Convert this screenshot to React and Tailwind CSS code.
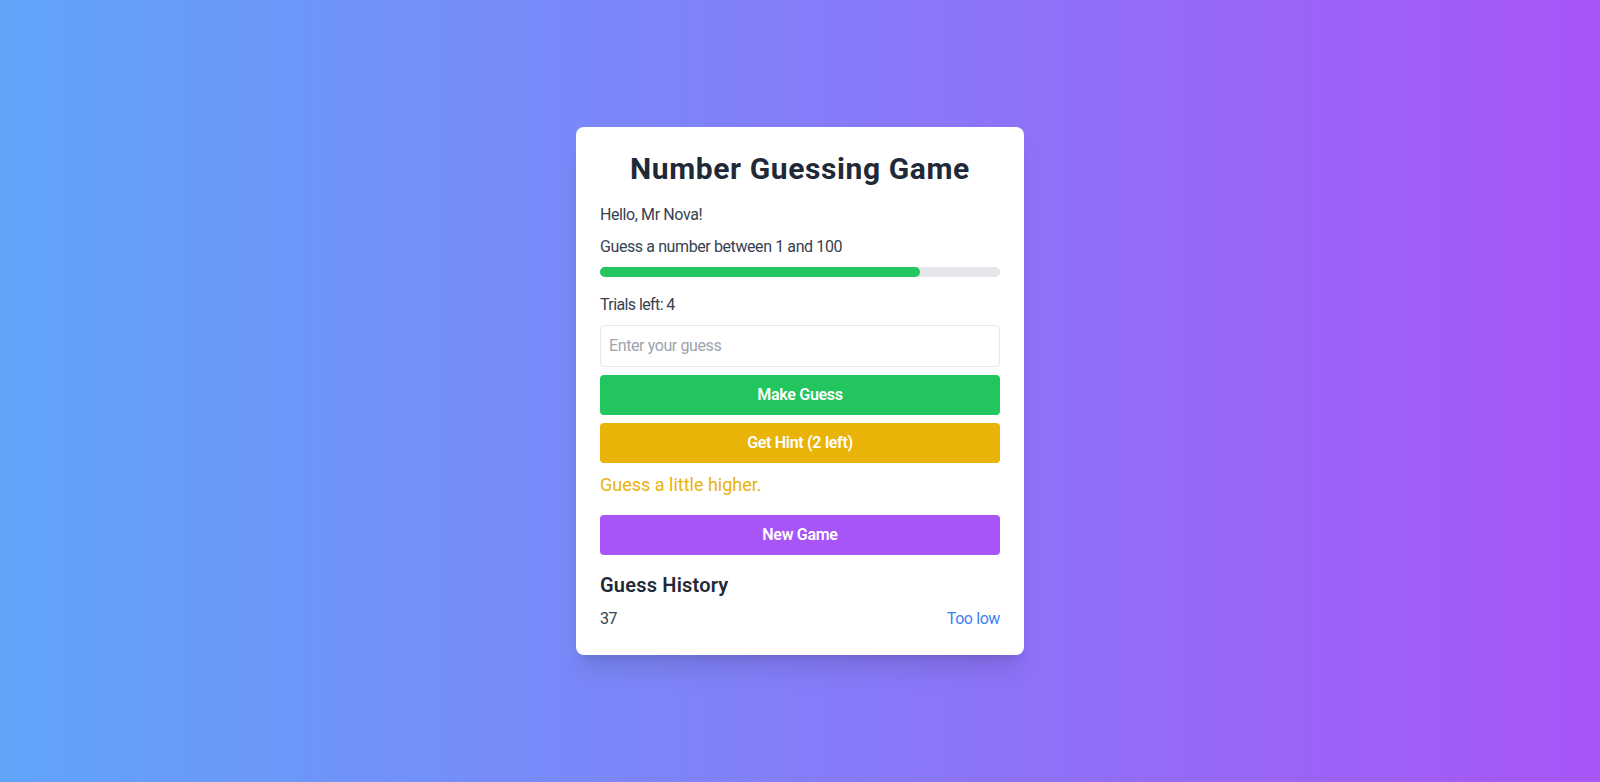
import React, { useState } from 'react';

export default function App() {
    const [guess, setGuess] = useState('');
    const history = [{ value: 37, result: 'Too low' }];

    return (
        <div
            className="min-h-screen flex items-center justify-center bg-linear-to-r/srgb from-[#60a5fa] to-[#a855f7]"
            style={{ fontFamily: '"Segoe UI", Roboto, "Noto Sans", sans-serif' }}
        >
            <div className="w-full max-w-md bg-white rounded-lg shadow-xl p-6">
                <h1 className="text-3xl font-bold text-[#1f2937] text-center tracking-[0.6px] mb-4">
                    Number Guessing Game
                </h1>

                <p className="text-[#374151] tracking-[-0.4px] mt-px mb-2">Hello, Mr Nova!</p>
                <p className="text-[#374151] tracking-[-0.4px] mb-2">Guess a number between 1 and 100</p>

                {/* Trials progress */}
                <div className="w-full h-2.5 bg-[#e5e7eb] rounded-full mb-4">
                    <div className="h-2.5 bg-[#22c55e] rounded-full" style={{ width: '80%' }} />
                </div>

                <p className="text-[#374151] tracking-[-0.6px] mb-2">Trials left: 4</p>

                <input
                    type="number"
                    value={guess}
                    onChange={(e) => setGuess(e.target.value)}
                    placeholder="Enter your guess"
                    className="w-full px-2 py-2 border border-[#e5e7eb] rounded text-[#374151] tracking-[-0.4px] placeholder-[#9ca3af] mb-2 outline-none"
                />

                <button className="w-full py-2 bg-[#22c55e] text-white font-semibold tracking-[-0.3px] rounded mb-2">
                    Make Guess
                </button>
                <button className="w-full py-2 bg-[#eab308] text-white font-semibold tracking-[-0.3px] rounded">
                    Get Hint (2 left)
                </button>

                <p className="text-lg text-[#eab308] mt-2 mb-4">Guess a little higher.</p>

                <button className="w-full py-2 bg-[#a855f7] text-white font-semibold tracking-[-0.3px] rounded">
                    New Game
                </button>

                <h2 className="text-xl font-semibold text-[#1f2937] tracking-[0.2px] mt-4 mb-2">Guess History</h2>
                <ul>
                    {history.map((h, i) => (
                        <li key={i} className="flex justify-between text-[#374151] tracking-[-0.4px]">
                            <span>{h.value}</span>
                            <span className="text-[#3b82f6]">{h.result}</span>
                        </li>
                    ))}
                </ul>
            </div>
        </div>
    );
}
